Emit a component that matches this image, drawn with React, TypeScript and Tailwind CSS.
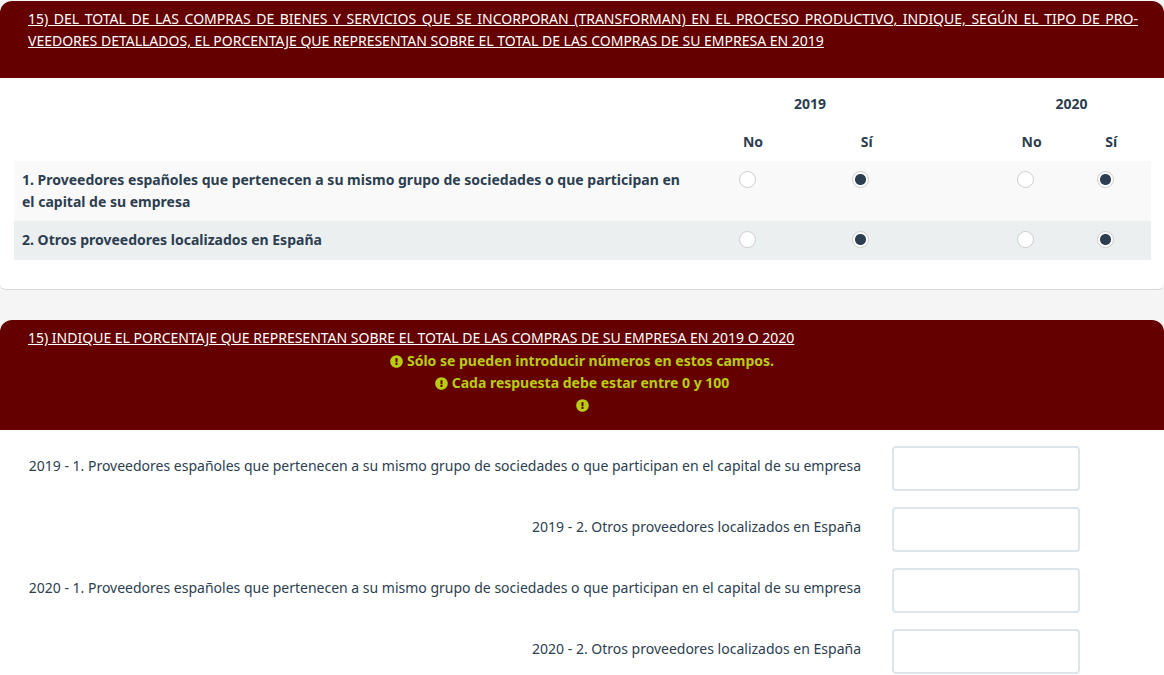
import type { ReactNode } from "react";
import { FaExclamationCircle } from "react-icons/fa";

const YEARS = ["2019", "2020"];

const PROVIDERS = [
  {
    id: "grupo",
    text: "1. Proveedores españoles que pertenecen a su mismo grupo de sociedades o que participan en el capital de su empresa",
  },
  { id: "otros", text: "2. Otros proveedores localizados en España" },
];

/* ---------- QuestionCard ---------- */
function QuestionCard({
  title,
  tips,
  children,
}: {
  title: ReactNode;
  tips?: string[];
  children: ReactNode;
}) {
  return (
    <section className="rounded-t-xl rounded-b-md border-b border-[#d5d9dc] bg-white last:rounded-b-none last:border-white">
      <header className="rounded-t-xl bg-[#640000] pt-[7px]">
        <h2 className="pr-[26px] pl-7 text-justify text-sm leading-[22px] text-white underline">
          {title}
        </h2>
        {tips ? (
          <ul className="pt-px pb-[14px] text-center text-sm leading-[22px] font-bold text-[#b8cc14]">
            {tips.map((tip, i) => (
              <li key={i} className="flex h-[22px] items-center justify-center gap-1">
                <FaExclamationCircle size={13} aria-hidden />
                {tip ? <span>{tip}</span> : null}
              </li>
            ))}
          </ul>
        ) : (
          <div className="h-[26px]" />
        )}
      </header>
      {children}
    </section>
  );
}

/* ---------- Radio ---------- */
function Radio({
  name,
  label,
  defaultChecked,
}: {
  name: string;
  label: string;
  defaultChecked?: boolean;
}) {
  return (
    <td className="py-[10px] pr-3 text-center align-top">
      <input
        type="radio"
        name={name}
        aria-label={label}
        defaultChecked={defaultChecked}
        className="mx-auto block size-[17px] appearance-none rounded-full border border-[#ccc] bg-white checked:bg-[radial-gradient(circle,#2c3e50_5px,#fff_6px)]"
      />
    </td>
  );
}

/* ---------- ProvidersTable ---------- */
function ProvidersTable() {
  return (
    <div className="pt-[7px] pr-[13px] pb-[29px] pl-[14px]">
      <table className="w-full table-fixed text-sm leading-[22px] font-bold">
        <colgroup>
          <col className="w-[60%]" />
          <col className="w-[10%]" />
          <col className="w-[10%]" />
          <col className="w-[6%]" />
          <col className="w-[7%]" />
          <col className="w-[7%]" />
        </colgroup>
        <thead>
          <tr>
            <td />
            <th colSpan={2} className="py-2">2019</th>
            <td />
            <th colSpan={2} className="py-2">2020</th>
          </tr>
          <tr>
            <td />
            <th className="py-2">No</th>
            <th className="py-2">Sí</th>
            <td />
            <th className="py-2">No</th>
            <th className="py-2">Sí</th>
          </tr>
        </thead>
        <tbody>
          {PROVIDERS.map((p) => (
            <tr key={p.id} className="h-[39px] odd:bg-[#f9f9f9] even:bg-[#ebeff0]">
              <th scope="row" className="px-2 py-2 text-left align-top">
                {p.text}
              </th>
              <Radio name={`${p.id}-2019`} label={`${p.text} 2019 No`} />
              <Radio name={`${p.id}-2019`} label={`${p.text} 2019 Sí`} defaultChecked />
              <td />
              <Radio name={`${p.id}-2020`} label={`${p.text} 2020 No`} />
              <Radio name={`${p.id}-2020`} label={`${p.text} 2020 Sí`} defaultChecked />
            </tr>
          ))}
        </tbody>
      </table>
    </div>
  );
}

/* ---------- PercentFields ---------- */
function PercentFields() {
  return (
    <div className="space-y-4 pt-4">
      {YEARS.flatMap((year) =>
        PROVIDERS.map((p) => (
          <div key={`${year}-${p.id}`} className="grid grid-cols-[3fr_1fr]">
            <label
              htmlFor={`pct-${year}-${p.id}`}
              className="pt-[9px] pr-3 text-right text-sm leading-[22px]"
            >
              {year} - {p.text}
            </label>
            <div className="pl-[19px]">
              <input
                id={`pct-${year}-${p.id}`}
                type="text"
                inputMode="numeric"
                className="block h-[45px] w-[188px] max-w-full rounded border-2 border-[#dce4ec] bg-white px-3 text-sm outline-none focus:border-[#2c3e50]"
              />
            </div>
          </div>
        )),
      )}
    </div>
  );
}

export default function App() {
  return (
    <main className="min-h-screen space-y-[30px] bg-[#f5f5f5] pt-px font-['Noto_Sans',sans-serif] text-[#2c3e50]">
      <QuestionCard
        title={
          <>
            15) DEL TOTAL DE LAS COMPRAS DE BIENES Y SERVICIOS QUE SE INCORPORAN
            (TRANSFORMAN) EN EL PROCESO PRODUCTIVO, INDIQUE, SEGÚN EL TIPO DE
            PRO&shy;VEEDORES DETALLADOS, EL PORCENTAJE QUE REPRESENTAN SOBRE EL TOTAL DE
            LAS COMPRAS DE SU EMPRESA EN 2019
          </>
        }
      >
        <ProvidersTable />
      </QuestionCard>
      <QuestionCard
        title="15) INDIQUE EL PORCENTAJE QUE REPRESENTAN SOBRE EL TOTAL DE LAS COMPRAS DE SU EMPRESA EN 2019 O 2020"
        tips={[
          "Sólo se pueden introducir números en estos campos.",
          "Cada respuesta debe estar entre 0 y 100",
          "",
        ]}
      >
        <PercentFields />
      </QuestionCard>
    </main>
  );
}
